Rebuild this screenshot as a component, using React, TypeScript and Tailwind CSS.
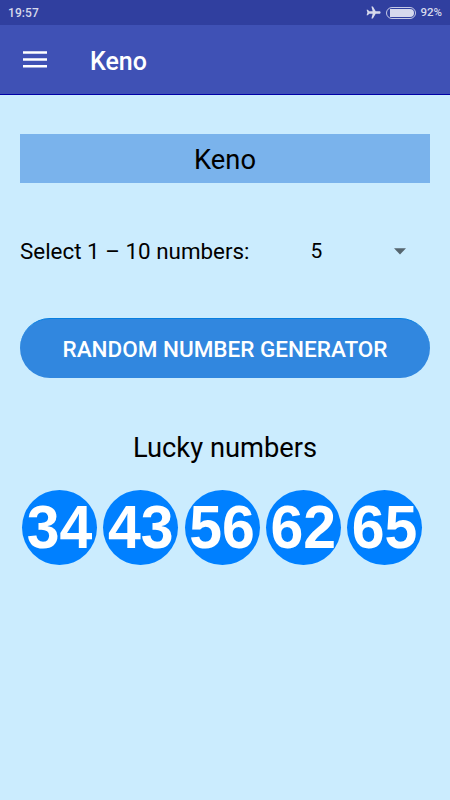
const LUCKY_NUMBERS = [34, 43, 56, 62, 65];

function StatusBar() {
  return (
    <div className="flex h-[25px] items-center bg-[#303f9f] pr-2 pl-2 text-[#d6d9ec]">
      <span className="text-[12px] leading-none font-medium tracking-[0.1px]">19:57</span>
      <svg className="ml-auto h-[13px] w-[15px]" viewBox="0 0 15 13" fill="currentColor">
        <path d="M14.6 6.5c0-.8-.6-1.3-1.3-1.3H9.7L6.9.5H5.4l1.3 4.7H3.2L1.9 3.8H.6l.8 2.7-.8 2.7h1.3l1.3-1.4h3.5l-1.3 4.7h1.5l2.8-4.7h3.6c.7 0 1.3-.5 1.3-1.3z" />
      </svg>
      <div className="ml-[5px] h-[12px] w-[30px] rounded-full border border-[#c6cae6] p-px">
        <div className="ml-[2px] h-full rounded-r-full rounded-l-[2px] bg-[#d6d9ec]" />
      </div>
      <span className="ml-[4px] text-[11.5px] leading-none font-medium">92%</span>
    </div>
  );
}

function AppBar() {
  return (
    <header className="flex h-[70px] items-center border-b border-[#0000a8] bg-[#3f51b5] pl-[23px] text-white">
      <button aria-label="Menu">
        <svg className="block h-[17px] w-6" viewBox="0 0 24 17" fill="currentColor">
          <path d="M0 .3h24v2.5H0zM0 7.2h24v2.5H0zM0 14.1h24v2.5H0z" />
        </svg>
      </button>
      <h1 className="mt-[3px] ml-[43px] text-[25px] leading-none font-medium">Keno</h1>
    </header>
  );
}

function Ball({ value }: { value: number }) {
  return (
    <div className="flex size-[75px] items-center justify-center rounded-full bg-[#0080ff] font-['Liberation_Sans',Arial,sans-serif] text-[59px] leading-none font-bold text-white">
      <span className="scale-y-105">{value}</span>
    </div>
  );
}

export default function App() {
  return (
    <div className="flex h-[800px] w-[450px] flex-col overflow-hidden bg-[#cbecfe] font-[Roboto,sans-serif] text-black">
      <StatusBar />
      <AppBar />
      <main className="flex flex-col px-5 pt-[39px]">
        <h2 className="flex h-[49px] items-center justify-center bg-[#7ab3ec] pt-[5px] text-[27.3px] leading-none">
          Keno
        </h2>

        <div className="mt-[51px] flex h-[34px] items-center text-[22.4px] leading-none">
          <span className="w-[290.5px]">Select 1 – 10 numbers:</span>
          <button className="flex flex-1 items-center text-[21px]">
            5
            <svg className="ml-[71.5px] h-[7px] w-3" viewBox="0 0 12 7" fill="#56666f">
              <path d="M0 .3h12L6 6.5z" />
            </svg>
          </button>
        </div>

        <button className="mt-[50px] flex h-[60px] items-center justify-center rounded-full border-t border-[#087fe0] bg-[#3187df] pt-[2px] text-[22.5px] leading-none font-medium text-white">
          RANDOM NUMBER GENERATOR
        </button>

        <p className="mt-[56px] text-center text-[27.3px] leading-7">Lucky numbers</p>

        <div className="mt-[27.5px] ml-[2px] flex gap-[6.25px]">
          {LUCKY_NUMBERS.map((n) => (
            <Ball key={n} value={n} />
          ))}
        </div>
      </main>
    </div>
  );
}
